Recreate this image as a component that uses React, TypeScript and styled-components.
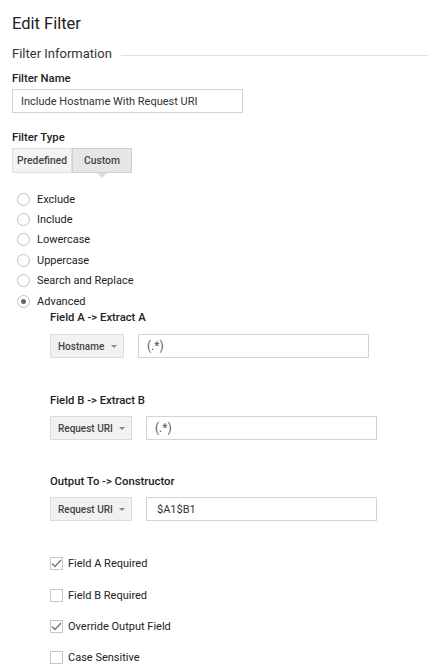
import React from 'react'
import styled, { createGlobalStyle } from 'styled-components'

const GlobalStyle = createGlobalStyle`
  body {
    margin: 0;
    background: #fff;
    font-family: Roboto, 'Liberation Sans', Arial, sans-serif;
    color: #222;
  }
`

const Page = styled.div`
  padding: 12px 12px 0 12px;
  width: 428px;
  box-sizing: border-box;
`

const Title = styled.h1`
  margin: 0;
  font-size: 16.5px;
  font-weight: 400;
  line-height: 24px;
  color: #222;
`

const SectionHeader = styled.div`
  display: flex;
  align-items: center;
  gap: 9px;
  margin: 8px -12px 0 0;
  font-size: 13px;
  line-height: 20px;
  color: #333;
  &::after {
    content: '';
    flex: 1;
    height: 1px;
    background: #e0e0e0;
    margin-top: 2px;
  }
`

const Label = styled.div<{ $top: number }>`
  margin-top: ${(p) => p.$top}px;
  font-size: 11.3px;
  font-weight: 500;
  line-height: 16px;
  color: #222;
`

const Spaced = styled.div<{ $top: number }>`
  margin-top: ${(p) => p.$top}px;
`

const TextInput = styled.div<{ $pad?: number; $size?: number; $color?: string }>`
  box-sizing: border-box;
  width: 231px;
  height: 24px;
  border: 1px solid #d4d4d4;
  padding-left: ${(p) => p.$pad ?? 8}px;
  display: flex;
  align-items: center;
  font-size: ${(p) => p.$size ?? 11}px;
  color: ${(p) => p.$color ?? '#333'};
  background: #fff;
`

const ToggleGroup = styled.div`
  display: flex;
  margin-top: 2px;
`

const Toggle = styled.div<{ $active?: boolean }>`
  position: relative;
  box-sizing: border-box;
  width: 60px;
  height: 25px;
  display: flex;
  align-items: center;
  justify-content: center;
  font-size: 10.3px;
  font-weight: 500;
  color: #444;
  background: ${(p) => (p.$active ? '#e6e6e6' : '#f3f3f3')};
  border: 1px solid ${(p) => (p.$active ? '#cfcfcf' : '#e0e0e0')};
  ${(p) =>
    p.$active &&
    `
    &::after {
      content: '';
      position: absolute;
      left: 50%;
      bottom: -6px;
      transform: translateX(-50%);
      border-left: 5px solid transparent;
      border-right: 5px solid transparent;
      border-top: 5px solid #dadada;
    }
  `}
`

const RadioList = styled.div`
  margin-top: 16px;
`

const RadioRow = styled.div`
  display: flex;
  align-items: center;
  height: 20.4px;
  font-size: 11px;
  color: #222;
`

const RadioDot = styled.span<{ $checked?: boolean }>`
  box-sizing: border-box;
  width: 13px;
  height: 13px;
  margin: 0 7px 0 5px;
  border-radius: 50%;
  border: 1px solid #c2c2c2;
  background: #fff;
  display: flex;
  align-items: center;
  justify-content: center;
  &::after {
    content: '';
    width: 5px;
    height: 5px;
    border-radius: 50%;
    background: ${(p) => (p.$checked ? '#666' : 'transparent')};
  }
`

const Indented = styled.div`
  padding-left: 38px;
`

const FieldRow = styled.div<{ $top: number }>`
  display: flex;
  gap: 14px;
  margin-top: ${(p) => p.$top}px;
`

const Select = styled.div<{ $width: number }>`
  box-sizing: border-box;
  width: ${(p) => p.$width}px;
  height: 24px;
  padding: 0 6px 0 7px;
  display: flex;
  align-items: center;
  justify-content: space-between;
  font-size: 10px;
  font-weight: 500;
  color: #444;
  background: #f1f1f1;
  border: 1px solid #dcdcdc;
  &::after {
    content: '';
    border-left: 3.5px solid transparent;
    border-right: 3.5px solid transparent;
    border-top: 3.5px solid #888;
    margin-top: 1px;
  }
`

const CheckList = styled.div`
  margin-top: 27px;
`

const CheckRow = styled.div`
  display: flex;
  align-items: center;
  height: 31.3px;
  font-size: 11px;
  color: #222;
`

const CheckBox = styled.span`
  box-sizing: border-box;
  width: 13px;
  height: 13px;
  margin-right: 5px;
  border: 1px solid #c6c6c6;
  background: #fff;
  display: flex;
  align-items: center;
  justify-content: center;
`

const radios = ['Exclude', 'Include', 'Lowercase', 'Uppercase', 'Search and Replace', 'Advanced']

const checks = [
  { text: 'Field A Required', checked: true },
  { text: 'Field B Required', checked: false },
  { text: 'Override Output Field', checked: true },
  { text: 'Case Sensitive', checked: false },
]

const Tick = () => (
  <svg width="11" height="9" viewBox="0 0 11 9">
    <path d="M1 4.5 L4 7.5 L10 1" fill="none" stroke="#777" strokeWidth="1.4" />
  </svg>
)

export default function App() {
  return (
    <Page>
      <GlobalStyle />
      <Title>Edit Filter</Title>
      <SectionHeader>Filter Information</SectionHeader>

      <Label $top={7}>Filter Name</Label>
      <Spaced $top={2}>
        <TextInput>Include Hostname With Request URI</TextInput>
      </Spaced>

      <Label $top={17}>Filter Type</Label>
      <ToggleGroup>
        <Toggle>Predefined</Toggle>
        <Toggle $active>Custom</Toggle>
      </ToggleGroup>

      <RadioList>
        {radios.map((r) => (
          <RadioRow key={r}>
            <RadioDot $checked={r === 'Advanced'} />
            {r}
          </RadioRow>
        ))}
      </RadioList>

      <Indented>
        <Label $top={-1}>Field A -&gt; Extract A</Label>
        <FieldRow $top={8}>
          <Select $width={74}>Hostname</Select>
          <TextInput $pad={8} $size={12} $color="#555">(.*)</TextInput>
        </FieldRow>

        <Label $top={35}>Field B -&gt; Extract B</Label>
        <FieldRow $top={7}>
          <Select $width={82}>Request URI</Select>
          <TextInput $pad={8} $size={12} $color="#555">(.*)</TextInput>
        </FieldRow>

        <Label $top={34}>Output To -&gt; Constructor</Label>
        <FieldRow $top={7}>
          <Select $width={82}>Request URI</Select>
          <TextInput $pad={10} $size={11} $color="#333">$A1$B1</TextInput>
        </FieldRow>

        <CheckList>
          {checks.map((c) => (
            <CheckRow key={c.text}>
              <CheckBox>{c.checked && <Tick />}</CheckBox>
              {c.text}
            </CheckRow>
          ))}
        </CheckList>
      </Indented>
    </Page>
  )
}
